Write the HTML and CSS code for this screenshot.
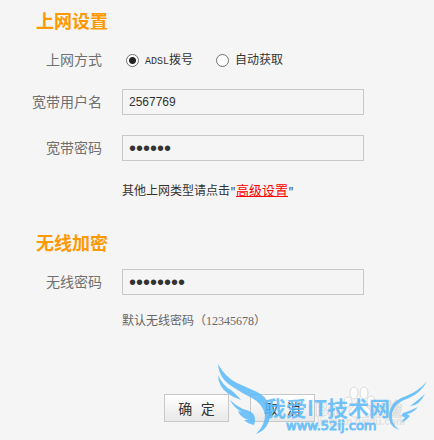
FILE: index.html
```html
<!DOCTYPE html>
<html lang="zh-CN">
<head>
<meta charset="utf-8">
<title>上网设置</title>
<link rel="stylesheet" href="styles.css">
</head>
<body>
<form class="setup">
  <section class="group">
    <h2 class="title">上网设置</h2>
    <div class="row" role="radiogroup" aria-labelledby="mode">
      <span class="label" id="mode">上网方式</span>
      <div class="choices">
        <label class="choice"><input type="radio" name="mode" checked><span><span class="latin">ADSL</span>拨号</span></label>
        <label class="choice"><input type="radio" name="mode"><span>自动获取</span></label>
      </div>
    </div>
    <div class="row">
      <label class="label" for="user">宽带用户名</label>
      <input class="field" id="user" type="text" value="2567769">
    </div>
    <div class="row">
      <label class="label" for="pass">宽带密码</label>
      <input class="field secret" id="pass" type="password" value="256776">
    </div>
    <p class="hint">其他上网类型请点击<span class="latin">"</span><a class="link" href="#advanced">高级设置</a><span class="latin">"</span></p>
  </section>
  <section class="group">
    <h2 class="title">无线加密</h2>
    <div class="row">
      <label class="label" for="wifi">无线密码</label>
      <input class="field secret" id="wifi" type="password" value="12345678">
    </div>
    <p class="hint muted">默认无线密码（<span class="digits">12345678</span>）</p>
  </section>
  <div class="actions">
    <button class="button" type="submit">确 定</button>
    <button class="button" type="button">取 消</button>
  </div>
</form>
<svg class="watermark" width="218" height="80" viewBox="0 0 218 80">
  <g class="ghost">
    <text x="99" y="56" class="ghost-name">Bai</text>
    <text x="150" y="56" class="ghost-name">经验</text>
    <text x="101" y="65" class="ghost-url">jingyan.baidu.com</text>
    <ellipse cx="132" cy="42" rx="4" ry="5"/>
    <ellipse cx="138" cy="33" rx="4" ry="6"/>
    <ellipse cx="148" cy="33" rx="4" ry="6"/>
    <ellipse cx="155" cy="41" rx="4" ry="5"/>
    <path d="M144 41q4 0 6 5q7 5 4 9q-2 3-10 2q-8 1-10-2q-3-4 4-9q2-5 6-5z"/>
  </g>
  <g class="wings">
    <path d="M2 4Q9 17 21 23L39 31Q54 37 54 53Q54 69 40 74Q49 65 49 55Q47 44 36 38Q27 34 17 27Q3 19 2 4z"/>
    <path d="M2 15Q7 26 15 30Q22 36 25 40Q10 35 5 26Q2 21 2 15z"/>
    <path d="M14 40Q20 46 27 49Q36 51 38 55Q40 60 38 65Q32 64 28 60L32 60Q24 57 22 51L26 52Q18 48 14 40z"/>
    <path d="M211 21Q205 33 193 38Q178 43 176 53Q174 62 183 70Q170 65 174 50Q177 40 190 36Q203 31 211 21z"/>
    <path d="M209 34Q203 46 194 46Q201 41 209 34z"/>
    <path d="M202 47Q197 53 191 54L194 56Q190 61 185 63L189 57Q184 57 187 53L193 51z"/>
  </g>
  <g class="brand">
    <text x="49" y="56" class="brand-name">我爱IT技术网</text>
    <text x="70" y="70" class="brand-url">www.52ij.com</text>
  </g>
</svg>
</body>
</html>
```
FILE: styles.css
```css
* {
  box-sizing: border-box;
}

body {
  position: relative;
  margin: 0;
  background: #f5f5f5;
  color: #333;
  font: 12px/20px "Liberation Sans", "Noto Sans CJK SC", sans-serif;
}

.setup {
  display: flex;
  flex-direction: column;
  gap: 31px;
  padding: 10px 20px 19px 0;
}

.title {
  margin: 0 0 13px 36px;
  color: #f90;
  font-size: 18px;
  line-height: 24px;
}

.row {
  display: grid;
  grid-template-columns: 102px minmax(0, 242px);
  gap: 20px;
  align-items: center;
  min-height: 26px;
  margin-bottom: 20px;
}

.row:nth-child(2) {
  margin-bottom: 16px;
}

.label {
  color: #707070;
  font-size: 14px;
  text-align: right;
}

.choices {
  display: flex;
  gap: 23px;
  padding-left: 4px;
}

.choice {
  display: flex;
  align-items: center;
  gap: 6px;
}

.choice input {
  appearance: none;
  width: 13px;
  height: 13px;
  margin: 0;
  border: 1px solid #707070;
  border-radius: 50%;
  background: #fff;
}

.choice input:checked {
  background: radial-gradient(circle, #222 3px, #fff 4px);
}

.latin {
  font-family: "Liberation Mono", monospace;
  font-size: 10px;
  line-height: 1;
}

.digits {
  font-family: "Liberation Serif", serif;
}

.field {
  width: 100%;
  height: 26px;
  padding: 0 6px;
  border: 1px solid #c8c8c8;
  background: transparent;
  color: #333;
  font: 12px "Liberation Sans", sans-serif;
}

.secret {
  font-size: 20px;
}

.hint {
  margin: 0 0 0 122px;
}

.muted {
  color: #666;
}

.link {
  color: #f00;
  font-size: 13px;
}

.actions {
  display: flex;
  gap: 21px;
  margin-top: 32px;
  padding-left: 164px;
}

.button {
  width: 65px;
  height: 28px;
  padding: 0;
  border: 1px solid #c8c8c8;
  background: linear-gradient(#fff, #e8e8e8);
  color: #333;
  font: 14px "Liberation Mono", "Noto Sans CJK SC", monospace;
}

.watermark {
  position: absolute;
  top: 360px;
  right: 0;
  pointer-events: none;
}

.ghost {
  fill: #fff;
  stroke: #d4d4d4;
  opacity: 0.8;
}

.ghost-name {
  font: bold 18px "Liberation Sans", "Noto Sans CJK SC", sans-serif;
}

.ghost-url {
  stroke: none;
  fill: #dcdcdc;
  font: bold 10px "Liberation Sans", sans-serif;
}

.wings,
.brand {
  fill: #5bbafa;
  opacity: 0.85;
}

.brand-name {
  font: bold 21px "Noto Sans CJK SC", sans-serif;
}

.brand-url {
  stroke: #5bbafa;
  font: 13px "DejaVu Sans", sans-serif;
}
```
